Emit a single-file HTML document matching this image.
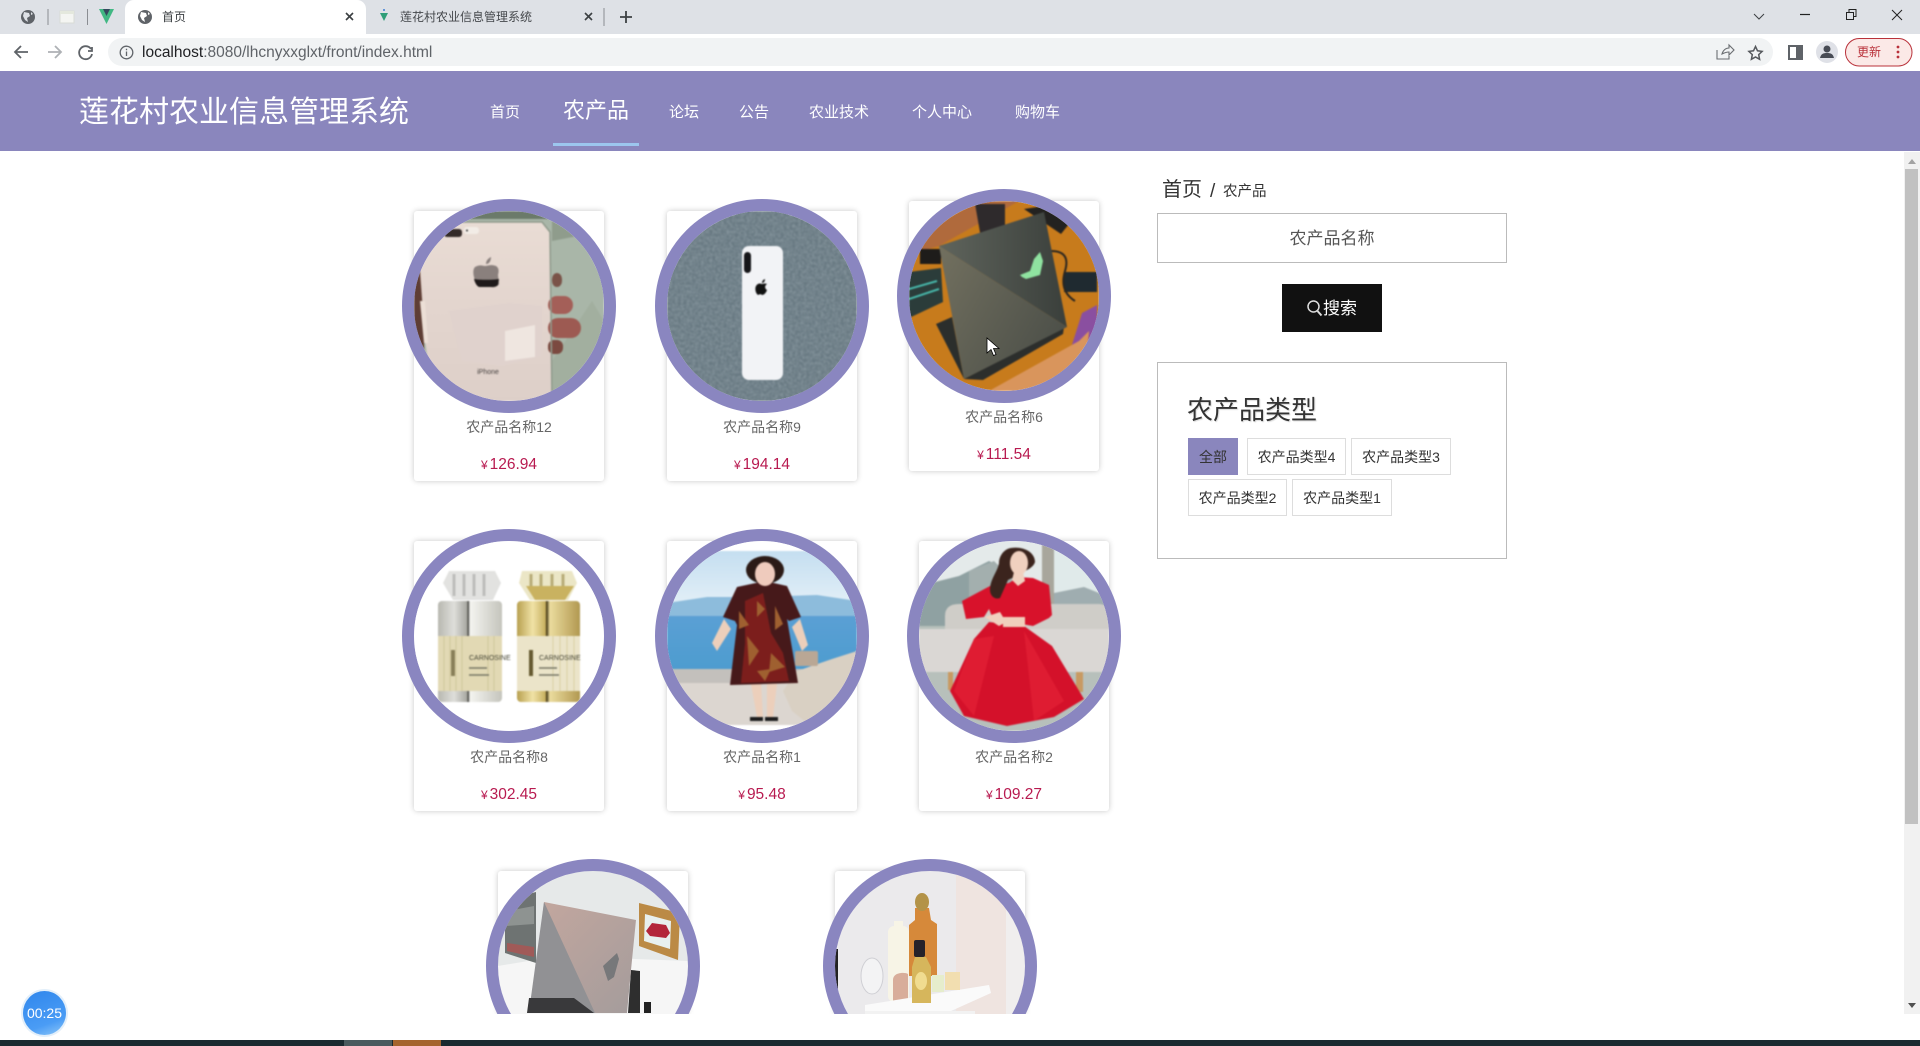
<!DOCTYPE html>
<html lang="zh"><head><meta charset="utf-8"><title>首页</title>
<style>
*{box-sizing:border-box;margin:0;padding:0}
html,body{width:1920px;height:1046px;overflow:hidden;background:#fff;font-family:"Liberation Sans","Noto Sans CJK SC",sans-serif}
.a{position:absolute}
.t{position:absolute;white-space:nowrap;line-height:1}
.card{position:absolute;width:190px;height:270px;background:#fff;border-radius:3px;box-shadow:0 0 6px rgba(0,0,0,.22)}
.circ{position:absolute;width:214px;height:214px;left:-12px;top:-12px;border:12px solid #8a86c0;border-radius:50%;overflow:hidden;background:#fff}
.circ svg{display:block;width:190px;height:190px;filter:blur(.7px)}
.nm{position:absolute;left:0;width:190px;top:208px;text-align:center;font-size:14px;line-height:16px;color:#666}
.pr{position:absolute;left:0;width:190px;top:245px;text-align:center;font-size:15.500px;line-height:18px;color:#b81a50}
.pr small{font-size:12px;margin-right:2px}
.nav{position:absolute;top:104px;font-size:15px;line-height:17px;color:#fff;white-space:nowrap}
.tag{position:absolute;height:37px;border:1px solid #ddd;font-size:14px;line-height:37px;text-align:center;color:#333;background:#fff}
</style></head><body>

<!-- browser chrome -->
<div class="a" style="left:0;top:0;width:1920px;height:34px;background:#dee1e6"></div>
<div class="a" style="left:125px;top:0;width:241px;height:34px;background:#fff;border-radius:9px 9px 0 0"></div>
<div class="a" style="left:0;top:34px;width:1920px;height:37px;background:#fff"></div>
<svg class="a" style="left:0;top:0" width="640" height="70" viewBox="0 0 640 70">
 <circle cx="28" cy="17" r="7" fill="#5f6368"/><path d="M24 12l5 1 1 3-3 2 1 4-3-2-2-4zM31 12l2 2-2 1z" fill="#dee1e6"/>
 <rect x="47.500" y="9" width="1" height="16" fill="#8a8d92"/>
 <rect x="60" y="11" width="14" height="12" fill="#f4f5f2" stroke="#d8dbd6"/><rect x="60" y="11" width="14" height="3" fill="#e4e8dd"/>
 <rect x="87" y="9" width="1" height="16" fill="#8a8d92"/>
 <path d="M99 9h15l-7.500 15z" fill="#41b883"/><path d="M103 9h7l-3.500 7z" fill="#35495e"/>
 <circle cx="145" cy="17" r="7" fill="#5f6368"/><path d="M141 12l5 1 1 3-3 2 1 4-3-2-2-4zM148 12l2 2-2 1z" fill="#fff"/>
 <path d="M346 13l7 7M353 13l-7 7" stroke="#3c4043" stroke-width="1.600"/>
 <circle cx="384" cy="10" r="1" fill="#3a7bd5"/><path d="M380 13h8l-4 8z" fill="#2f9e78"/>
 <path d="M585 13l7 7M592 13l-7 7" stroke="#3c4043" stroke-width="1.600"/>
 <rect x="603.500" y="8" width="1" height="18" fill="#8a8d92"/>
 <path d="M626 11v12M620 17h12" stroke="#3c4043" stroke-width="1.800"/>
 <path d="M28 52H16M21 46l-6 6 6 6" fill="none" stroke="#5f6368" stroke-width="1.800"/>
 <path d="M48 52h12M55 46l6 6-6 6" fill="none" stroke="#aeb1b5" stroke-width="1.800"/>
 <path d="M92 47v4h-4M91 49a6.500 6.500 0 1 0 1 5" fill="none" stroke="#5f6368" stroke-width="1.800"/>
</svg>
<div class="t" style="left:162px;top:11px;font-size:12px;color:#3c4043">首页</div>
<div class="t" style="left:400px;top:11px;font-size:12px;color:#45484c">莲花村农业信息管理系统</div>
<div class="a" style="left:108px;top:38px;width:1665px;height:28px;background:#f1f3f4;border-radius:14px"></div>
<svg class="a" style="left:118px;top:44px" width="17" height="17" viewBox="0 0 17 17"><circle cx="8.500" cy="8.500" r="6.300" fill="none" stroke="#5f6368" stroke-width="1.300"/><path d="M8.500 7.500v4.500M8.500 4.800v1.400" stroke="#5f6368" stroke-width="1.300"/></svg>
<div class="t" style="left:142px;top:44px;font-size:15.500px;color:#5f6368;line-height:18px"><span style="color:#202124">localhost</span>:8080/lhcnyxxglxt/front/index.html</div>
<svg class="a" style="left:1700px;top:0" width="220" height="70" viewBox="0 0 220 70">
 <path d="M54 14l5 5 5-5" fill="none" stroke="#3c4043"/>
 <path d="M100 14.500h10" stroke="#222" stroke-width="1.200"/>
 <path d="M146.500 12.500h7v7h-7zM149 12v-2.500h7v7h-2.500" fill="none" stroke="#222"/>
 <path d="M192 10l10 10M202 10l-10 10" stroke="#222"/>
 <path d="M17 50v9h12v-3M22 54c1-4 4-6 7-6v-3l5 5-5 5v-3c-3 0-5 1-7 2z" fill="none" stroke="#6b6e72" stroke-width="1.100"/>
 <path d="M55.500 46.500l2 4.300 4.600.6-3.400 3.200.9 4.700-4.100-2.300-4.100 2.300.9-4.700-3.400-3.200 4.600-.6z" fill="none" stroke="#55585c" stroke-width="1.500"/>
 <rect x="89" y="46" width="13" height="13" fill="#fff" stroke="#5f6368" stroke-width="2"/><rect x="96" y="46" width="7" height="13" fill="#5f6368"/>
 <circle cx="127" cy="52" r="11" fill="#dfe1e7"/><circle cx="127" cy="49" r="3.500" fill="#474b54"/><path d="M120 58c1-4 3-5 7-5s6 1 7 5z" fill="#474b54"/>
 <rect x="145.500" y="38.500" width="66.500" height="27.500" rx="13.700" fill="#fbe9e7" stroke="#b9313a"/>
 <circle cx="198" cy="47" r="1.400" fill="#b9313a"/><circle cx="198" cy="52" r="1.400" fill="#b9313a"/><circle cx="198" cy="57" r="1.400" fill="#b9313a"/>
</svg>
<div class="t" style="left:1857px;top:46px;font-size:12px;color:#b9313a">更新</div>

<!-- page -->
<div class="a" style="left:0;top:71px;width:1920px;height:80px;background:#8a86bd"></div>
<div class="t" style="left:79px;top:96px;font-size:30px;line-height:34px;color:#fff">莲花村农业信息管理系统</div>
<div class="nav" style="left:490px">首页</div>
<div class="nav" style="left:563px;top:98px;font-size:22px;line-height:25px">农产品</div>
<div class="a" style="left:553px;top:143px;width:86px;height:3px;background:#9cc6ee"></div>
<div class="nav" style="left:669px">论坛</div>
<div class="nav" style="left:739px">公告</div>
<div class="nav" style="left:809px">农业技术</div>
<div class="nav" style="left:912px">个人中心</div>
<div class="nav" style="left:1015px">购物车</div>

<div class="a" style="left:0;top:151px;width:1905px;height:863px;overflow:hidden">
<div class="a" style="left:0;top:-151px;width:1905px;height:1014px">

<!-- row 1 -->
<div class="card" style="left:414px;top:211px"><div class="circ"><svg viewBox="0 0 190 190">
 <defs><linearGradient id="ph" x1="0" x2="0" y1="0" y2="1"><stop offset="0" stop-color="#e9dcd4"/><stop offset=".45" stop-color="#e3d5ce"/><stop offset="1" stop-color="#ddcfc8"/></linearGradient></defs>
 <rect width="190" height="190" fill="#a9b6a8"/><path d="M138 30L190 20V0H138z" fill="#8f9c8c"/><path d="M138 150l40-60 12 20v80h-52z" fill="#a2af9f"/>
 <rect width="190" height="8" fill="#6b7a6a"/>
 <rect width="10" height="140" y="60" fill="#5e3d34"/>
 <rect x="0" y="0" width="45" height="50" fill="#6c746a"/>
 <path d="M45 11H128l8 10 2 169H20l-9-60-6-85 12-22z" fill="url(#ph)"/>
 <path d="M6 90h5l3 42h-4z" fill="#ecdfd6"/><path d="M35 100l60-8 33 3v50l-40 10-40-5z" fill="#e0d2cd"/>
 <path d="M91 120l30-6v32l-30 4z" fill="#efe6e0"/>
 <rect x="30" y="18" width="18" height="8" rx="3" fill="#332a28"/><rect x="50" y="16" width="15" height="7" rx="3" fill="#f2ece6"/><circle cx="53" cy="19.500" r="1" fill="#333"/>
 <path d="M61 56c5-3 8-1 10-1s6-2 11 0c3 2 3 5 2 9l1 9c-2 3-5 4-8 3H66c-3 0-5-5-6-10-1-4-1-8 1-10z" fill="#8a807d"/>
 <path d="M60 68c6 1 18 1 25 0l-1 6c-2 2-5 2-8 2H66c-3 0-5-4-6-8z" fill="#1f1a1a"/><path d="M72 53c0-4 3-6 5-7 0 4-2 7-5 7z" fill="#8a807d"/>
 <text x="74" y="163" font-size="7" text-anchor="middle" fill="#443f3e">iPhone</text>
 <rect x="138" y="62" width="10" height="14" rx="6" fill="#7a5348"/>
 <rect x="134" y="85" width="25" height="18" rx="9" fill="#a45f58"/><rect x="134" y="107" width="33" height="20" rx="10" fill="#9d5a52"/><rect x="134" y="129" width="15" height="14" rx="6" fill="#7b4a40"/>
 <path d="M45 11H128l8 10 2 169" fill="none" stroke="#8f9a8c" stroke-width="1.500"/>
</svg></div><div class="nm">农产品名称12</div><div class="pr"><small>¥</small>126.94</div></div>

<div class="card" style="left:667px;top:211px"><div class="circ"><svg viewBox="0 0 190 190">
 <filter id="n"><feTurbulence type="fractalNoise" baseFrequency=".35" numOctaves="2" seed="3"/><feColorMatrix values="0 0 0 0 .52 0 0 0 0 .6 0 0 0 0 .64 .5 0 0 0 -.12"/></filter>
 <rect width="190" height="190" fill="#677881"/><rect width="190" height="190" filter="url(#n)"/>
 <rect x="75" y="35" width="41" height="134" rx="7" fill="#f2f3f6"/>
 <rect x="77" y="41" width="7" height="21" rx="3.500" fill="#151518"/>
 <path d="M91 73c2-1 3 0 4 0 1 0 3-1 5 0-3 2-2 5 0 6-1 3-3 5-5 5-1-1-2-1-4 0-3-2-4-9 0-11zM95 72c0-2 1-3 3-4 0 2-1 4-3 4z" fill="#111"/>
</svg></div><div class="nm">农产品名称9</div><div class="pr"><small>¥</small>194.14</div></div>

<div class="card" style="left:909px;top:201px"><div class="circ"><svg viewBox="0 0 190 190">
 <defs><linearGradient id="l1" x1="0" y1="0" x2="1" y2="0"><stop offset="0" stop-color="#5f645c"/><stop offset="1" stop-color="#3a3f3b"/></linearGradient><linearGradient id="l2" x1="0" y1="0" x2="1" y2=".6"><stop offset="0" stop-color="#72705f"/><stop offset="1" stop-color="#4d5049"/></linearGradient></defs>
 <rect width="190" height="190" fill="#c77b1c"/><path d="M0 40L70 0h40L30 45l-30 8z" fill="#b06a3c"/>
 <path d="M66 3h30v28l-24 6z" fill="#2e2a2c"/><path d="M115 8l20-3 25 18-8 10z" fill="#232220"/>
 <rect x="11" y="48" width="21" height="15" fill="#1e1c1a"/>
 <path d="M0 71l32-4 2 34-34 16z" fill="#2b3c3a"/><path d="M0 88l28-8M0 98l30-10" stroke="#47b5a8" stroke-width="2"/>
 <path d="M155 71h33v20h-33z" fill="#1f2a30"/><path d="M142 50q20 0 14 20t10 30" fill="none" stroke="#2a2620" stroke-width="2"/>
 <path d="M161 150l12-38 15-8v45l-14 14z" fill="#8a4fa0"/>
 <path d="M80 190l90-50 10-10-5 60z" fill="#d9955c"/>
 <path d="M27 123l16-7 12 62z" fill="#2b2e2c"/><path d="M55 178l100-52-1 7-80 46z" fill="#2c2e2c"/>
 <path d="M30 45L135 11 158 126z" fill="url(#l1)"/><path d="M30 45L158 126 55 178z" fill="url(#l2)"/>
 <path d="M131 51l3 9-3 14-14 4-4-2-2-2 10-4 4-12z" fill="#8fe3a0"/>
</svg></div><div class="nm">农产品名称6</div><div class="pr"><small>¥</small>111.54</div></div>

<!-- row 2 -->
<div class="card" style="left:414px;top:541px"><div class="circ"><svg viewBox="0 0 190 190">
 <defs><linearGradient id="sv" x1="0" x2="1" y1="0" y2="0"><stop offset="0" stop-color="#b8b8b0"/><stop offset=".25" stop-color="#dededa"/><stop offset=".45" stop-color="#a8a8a2"/><stop offset=".47" stop-color="#3c3c38"/><stop offset=".5" stop-color="#f4f4f0"/><stop offset="1" stop-color="#c4c4bc"/></linearGradient>
 <linearGradient id="gd" x1="0" x2="1" y1="0" y2="0"><stop offset="0" stop-color="#b8a050"/><stop offset=".25" stop-color="#f0e2a6"/><stop offset=".45" stop-color="#c8b060"/><stop offset=".47" stop-color="#3e3210"/><stop offset=".52" stop-color="#ecdc9e"/><stop offset="1" stop-color="#b09850"/></linearGradient></defs>
 <rect width="190" height="190" fill="#fff"/>
 <path d="M35 30h46l6 12-8 17H39l-10-17z" fill="#e2e2e0"/><path d="M40 33v22M50 33v22M60 33v22M70 33v22" stroke="#bdbdbb" stroke-width="3"/>
 <rect x="24" y="60" width="64" height="101" rx="4" fill="url(#sv)"/><rect x="24" y="95" width="64" height="55" fill="#e2d9b4"/>
 <path d="M30 95v55M36 95v55M42 95v55M48 95v55M80 95v55M74 95v55" stroke="#d0c69c"/>
 <text x="55" y="119" font-size="7" fill="#443">CARNOSINE</text><path d="M55 127h18M55 134h20" stroke="#776" stroke-width="1.500"/><rect x="37" y="109" width="4" height="26" fill="#887f58"/>
 <path d="M108 30h50l5 12-9 17h-38l-11-17z" fill="#ebe6c6"/><path d="M112 45l9 14h30l9-14z" fill="#c9b260"/><path d="M117 33v12M127 33v12M138 33v12M149 33v12" stroke="#b8ac78" stroke-width="3"/>
 <rect x="103" y="60" width="63" height="101" rx="4" fill="url(#gd)"/><rect x="103" y="95" width="63" height="55" fill="#ebe4c9"/>
 <path d="M139 95v55M146 95v55M153 95v55M160 95v55" stroke="#d8cfa6"/>
 <text x="125" y="119" font-size="7" fill="#443">CARNOSINE</text><path d="M125 127h18M125 134h20" stroke="#776" stroke-width="1.500"/><rect x="115" y="109" width="4" height="26" fill="#665a30"/>
</svg></div><div class="nm">农产品名称8</div><div class="pr"><small>¥</small>302.45</div></div>

<div class="card" style="left:667px;top:541px"><div class="circ"><svg viewBox="0 0 190 190">
 <defs><linearGradient id="sk" x1="0" x2="0" y1="0" y2="1"><stop offset="0" stop-color="#c4def0"/><stop offset="1" stop-color="#e6f1f8"/></linearGradient><linearGradient id="se" x1="0" x2="0" y1="0" y2="1"><stop offset="0" stop-color="#5a9fd4"/><stop offset="1" stop-color="#4d9ccf"/></linearGradient></defs>
 <rect width="190" height="190" fill="#cfcac5"/><rect width="190" height="60" y="10" fill="url(#sk)"/><rect width="190" height="10" fill="#fff"/>
 <path d="M0 62l40-6 50 0 60-2 40 6v16H0z" fill="#8dbcdc"/>
 <rect y="75" width="190" height="53" fill="url(#se)"/>
 <rect y="128" width="190" height="14" fill="#c3c0bc"/><rect y="142" width="190" height="45" fill="#dcd6d0"/><rect y="184" width="190" height="6" fill="#fff"/>
 <path d="M116 150l14-20 35-12 25-8v80h-40l-25-20z" fill="#d9d0c3"/>
 <path d="M84 143h10l2 33h-6zM100 143h10l-4 33h-6z" fill="#eccfbb"/><path d="M83 176h13v4H83zM98 176h13v4H98z" fill="#1d1d1d"/>
 <path d="M57 78l-12 24 5 8 14-22zM133 78l8 26-6 6-10-24z" fill="#eccfbb"/>
 <path d="M70 46l28-6 22 5 14 31-12 4-2-2 11 64-68 2 7-60-2-4-12-4z" fill="#46191a"/>
 <path d="M78 60l18-8 8 40 12 20 6 28-48 2 4-40z" fill="#7c1e1c"/><path d="M80 95l12 15-10 15zM108 65l8 18-8 6zM104 112l14 14-16 5zM72 70l10 14-10 4zM90 60l8 8-8 8zM90 130l14-2-6 12z" fill="#9f6030"/>
 <rect x="128" y="110" width="23" height="15" rx="2" fill="#b9a795"/>
 <ellipse cx="98" cy="29" rx="19" ry="14" fill="#2b1a16"/><ellipse cx="98" cy="33" rx="10" ry="12" fill="#efcbbd"/>
</svg></div><div class="nm">农产品名称1</div><div class="pr"><small>¥</small>95.48</div></div>

<div class="card" style="left:919px;top:541px"><div class="circ"><svg viewBox="0 0 190 190">
 <rect width="190" height="190" fill="#b7c0bb"/><rect width="125" height="85" fill="#e4eaea"/><path d="M0 85V45l40-10 30-15 40 20v45z" fill="#8fa1a2"/><path d="M50 30l25-10 25 25v40H50z" fill="#a3afae"/>
 <rect x="135" width="55" height="62" fill="#e0eaea"/><path d="M135 52l30-6 25 10v10h-55z" fill="#9fadb0"/><rect x="123" y="2" width="12" height="62" fill="#a8a69c"/>
 <path d="M26 85V75q0-12 14-12H180q10 0 10 12v16H26z" fill="#cfcdc8"/><path d="M0 88H190V131H0z" fill="#dad7d4"/>
 <rect x="29" y="131" width="5" height="18" fill="#c89a62"/><rect x="157" y="131" width="7" height="20" fill="#c89a62"/>
 <path d="M70 81l35 4 28 20 32 53-30 18-47 9-43-10-14-25 24-52z" fill="#d4112a"/>
 <path d="M55 98l-20 52 20 25 20-80zM105 90l40 70-30 20z" fill="#df1c32"/>
 <path d="M71 45l-28 15 4 18 18-2 5-8 4 10 40 7 16-8 3-3-3-30-16-7-15-1-9 6z" fill="#d8122b"/>
 <path d="M66 76l14 9 7-4-6-10z" fill="#f0d0bf"/><rect x="84" y="76" width="22" height="10" fill="#f0cfbd"/>
 <path d="M92 7c-7 1-12 8-12 15-1 8-9 16-9 27 0 6 5 10 10 8l8-18 12-6c3-3 13-5 15-12 0-10-12-16-24-14z" fill="#3b241d"/>
 <ellipse cx="100" cy="22" rx="9" ry="12" fill="#f0d0bf"/><path d="M95 31h9l2 9-7 5-6-6z" fill="#f0d0bf"/>
</svg></div><div class="nm">农产品名称2</div><div class="pr"><small>¥</small>109.27</div></div>

<!-- row 3 -->
<div class="card" style="left:498px;top:871px;height:143px;border-radius:3px 3px 0 0">
<svg class="a" style="left:-12px;top:-12px" width="214" height="155" viewBox="-12 -12 214 155">
 <defs><clipPath id="c3"><circle cx="95" cy="95" r="95"/></clipPath><linearGradient id="lr" x1="0" y1="0" x2="1" y2="1"><stop offset="0" stop-color="#c4a79e"/><stop offset="1" stop-color="#a49c9c"/></linearGradient></defs>
 <g clip-path="url(#c3)">
 <rect width="190" height="190" fill="#e6e9e9"/><path d="M0 95L60 85l130 5v100H0z" fill="#f6f6f6"/>
 <path d="M7 29l31-8v71L7 82z" fill="#6e7372"/><path d="M9 40l27-5v18L9 55z" fill="#8e9391"/><path d="M9 72l27 4v10L9 80z" fill="#a05a58"/>
 <path d="M133 99l9 1v42h-12z" fill="#2e2e2e"/><path d="M146 131h7v11h-7z" fill="#222"/>
 <path d="M46 31l92 18-5 50-4 43H33z" fill="url(#lr)"/><path d="M46 31L33 126l-2 16h66z" fill="#919194"/>
 <path d="M105 95l14-13 2 6-5 18-6 4z" fill="#77787a"/>
 <path d="M31 127h45l20 15H29z" fill="#39393b"/>
 <path d="M141 32l41 10-2 47-39-14z" fill="#bb8a45"/><path d="M147 43l26 7-1 28-26-8z" fill="#e8f0ee"/><path d="M148 60l6-8 14 2 4 8-4 5-16-2z" fill="#b3263a"/>
 </g>
 <circle cx="95" cy="95" r="101" fill="none" stroke="#8a86c0" stroke-width="12"/>
</svg></div>

<div class="card" style="left:835px;top:871px;height:143px;border-radius:3px 3px 0 0">
<svg class="a" style="left:-12px;top:-12px" width="214" height="155" viewBox="-12 -12 214 155">
 <defs><clipPath id="c4"><circle cx="95" cy="95" r="95"/></clipPath></defs>
 <g clip-path="url(#c4)">
 <rect width="190" height="190" fill="#ebeaec"/><path d="M121 0h50v190h-50z" fill="#efe4e0"/><path d="M171 0h19v190h-19z" fill="#f0eeee"/>
 <rect x="0" y="78" width="3" height="46" fill="#222"/>
 <path d="M80 37h14l2 12 6 4v52H74V54l6-5z" fill="#d6893a"/><ellipse cx="87" cy="31" rx="7" ry="9" fill="#b39348"/>
 <rect x="53" y="55" width="21" height="76" rx="6" fill="#f7f4e6"/><rect x="59" y="50" width="9" height="8" fill="#f7f4e6"/><path d="M58 131v-22c0-8 12-8 15-6v28z" fill="#d8ad9a"/>
 <path d="M30 134l124-20 2 8-40 18H30z" fill="#fafafa"/><path d="M30 140h110v3H30z" fill="#f2f2f2"/>
 <ellipse cx="37" cy="105" rx="11" ry="18" fill="#f3f3f4" stroke="#cfcfd4"/>
 <rect x="79" y="69" width="11" height="17" rx="2" fill="#25222a"/><path d="M80 86h11l5 10v36H77V96z" fill="#d6b65c"/><ellipse cx="86" cy="110" rx="6" ry="9" fill="#f0dc90"/>
 <rect x="97" y="104" width="12" height="17" fill="#e6edcc"/><rect x="110" y="101" width="15" height="18" fill="#f2deb0"/>
 </g>
 <circle cx="95" cy="95" r="101" fill="none" stroke="#8a86c0" stroke-width="12"/>
</svg></div>

<!-- sidebar -->
<div class="t" style="left:1162px;top:179px;font-size:20px;line-height:22px;color:#333">首页</div>
<div class="t" style="left:1210px;top:181px;font-size:19px;line-height:22px;color:#333">/</div>
<div class="t" style="left:1223px;top:184px;font-size:14.500px;line-height:16px;color:#333">农产品</div>
<div class="a" style="left:1157px;top:213px;width:350px;height:50px;border:1px solid #bbb;text-align:center;font-size:17px;line-height:50px;color:#555">农产品名称</div>
<div class="a" style="left:1282px;top:284px;width:100px;height:48px;background:#111"></div>
<svg class="a" style="left:1306px;top:299px" width="17" height="18" viewBox="0 0 17 18"><circle cx="7.500" cy="7.500" r="5.500" fill="none" stroke="#ddd" stroke-width="1.500"/><path d="M11.500 12l4 4.500" stroke="#ddd" stroke-width="2"/></svg>
<div class="t" style="left:1323px;top:299px;font-size:17px;line-height:19px;color:#fff">搜索</div>
<div class="a" style="left:1157px;top:362px;width:350px;height:197px;border:1px solid #bbb"></div>
<div class="t" style="left:1187px;top:395px;font-size:26px;line-height:30px;color:#333;text-shadow:1px 1px 1px rgba(0,0,0,.15)">农产品类型</div>
<div class="tag" style="left:1188px;top:438px;width:50px;background:#8a86bd;border-color:#8a86bd">全部</div>
<div class="tag" style="left:1247px;top:438px;width:99px">农产品类型4</div>
<div class="tag" style="left:1351px;top:438px;width:100px">农产品类型3</div>
<div class="tag" style="left:1188px;top:479px;width:99px">农产品类型2</div>
<div class="tag" style="left:1292px;top:479px;width:100px">农产品类型1</div>
</div></div>

<!-- scrollbar -->
<div class="a" style="left:1904px;top:152px;width:16px;height:862px;background:#f1f1f1"></div>
<div class="a" style="left:1905px;top:169px;width:13px;height:655px;background:#c1c1c1"></div>
<svg class="a" style="left:1904px;top:152px" width="16" height="862" viewBox="0 0 16 862"><path d="M8 7l4 5H4z" fill="#a3a3a3"/><path d="M8 856l4-5H4z" fill="#505050"/></svg>

<!-- timer -->
<div class="a" style="left:21px;top:989px;width:47px;height:48px;border-radius:50%;background:linear-gradient(160deg,#2f86ec 0%,#4a9cf5 70%,#8fc8f8 100%);border:2px solid #e3effa;color:#fff;font-size:14px;line-height:44px;text-align:center">00:25</div>

<!-- bottom bar -->
<div class="a" style="left:0;top:1040px;width:1920px;height:6px;background:#1a2a30"></div>
<div class="a" style="left:344px;top:1040px;width:48px;height:6px;background:#4a5a5e"></div>
<div class="a" style="left:393px;top:1040px;width:48px;height:6px;background:#a5642e"></div>

<!-- cursor -->
<svg class="a" style="left:986px;top:337px" width="14" height="20" viewBox="0 0 14 20"><path d="M1 1v15l4-3.500 2.500 6 2.500-1-2.500-6H13z" fill="#fff" stroke="#000" stroke-width=".8"/></svg>
</body></html>
